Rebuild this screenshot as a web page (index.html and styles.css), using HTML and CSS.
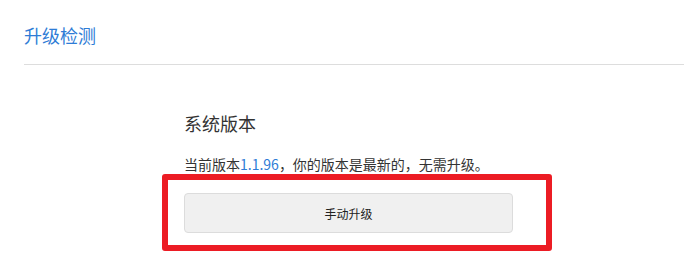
FILE: index.html
```html
<!DOCTYPE html>
<html lang="zh-CN">
<head>
<meta charset="utf-8">
<title>升级检测</title>
<link rel="stylesheet" href="styles.css">
</head>
<body>
<div class="page">
  <header class="header">
    <h1 class="title">升级检测</h1>
  </header>
  <section class="section">
    <h2 class="section-title">系统版本</h2>
    <p class="status">当前版本<span class="version">1.1.96</span>，你的版本是最新的，无需升级。</p>
    <div class="highlight">
      <button class="btn" type="button">手动升级</button>
    </div>
  </section>
</div>
</body>
</html>
```
FILE: styles.css
```css
html, body {
  margin: 0;
  padding: 0;
  background: #ffffff;
}
body {
  font-family: "Noto Sans CJK SC", "Noto Sans", sans-serif;
  color: #333333;
}
.page {
  padding-left: 24px;
}
.header {
  box-sizing: border-box;
  height: 65px;
  border-bottom: 1px solid #dddddd;
}
.title {
  margin: 0;
  padding-top: 23px;
  font-size: 18px;
  line-height: 24px;
  font-weight: normal;
  color: #2e7cd6;
}
.section {
  padding-left: 160px;
}
.section-title {
  margin: 0;
  padding-top: 46px;
  font-size: 18px;
  line-height: 24px;
  font-weight: normal;
  color: #333333;
}
.status {
  margin: 19px 0 0;
  font-size: 14px;
  line-height: 20px;
  color: #333333;
}
.version {
  color: #2e7cd6;
}
.highlight {
  margin-left: -22px;
  margin-top: 0;
  width: 390px;
  box-sizing: border-box;
  border: 6px solid #ec1c24;
  border-radius: 3px;
  padding: 13px 33px 12px 16px;
}
.btn {
  display: block;
  width: 329px;
  height: 40px;
  box-sizing: border-box;
  background: #f0f0f0;
  border: 1px solid #dcdcdc;
  border-radius: 4px;
  font-family: "Noto Sans CJK SC", "Noto Sans", sans-serif;
  font-size: 12px;
  color: #222222;
  padding: 0;
}
```
